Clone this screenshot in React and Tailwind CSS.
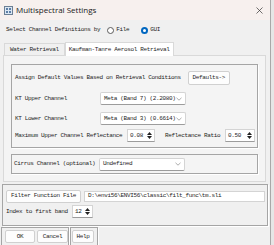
import React from 'react';

const txt = "font-['Liberation_Mono',monospace] text-[6px] tracking-[-0.35px] text-[#1e1e1e] leading-none whitespace-nowrap";

function Chevron() {
  return (
    <svg width="6" height="4" viewBox="0 0 6 4" className="shrink-0">
      <path d="M0.5 0.8 L3 3.2 L5.5 0.8" fill="none" stroke="#8a8a8a" strokeWidth="0.7" />
    </svg>
  );
}

function Select({ value, w = 'w-[86px]' }) {
  return (
    <div className={`${w} h-[13px] bg-white border border-[#d4d4d4] border-b-[#9c9c9c] rounded-[2px] flex items-center justify-between pl-[3px] pr-[3px]`}>
      <span className={txt}>{value}</span>
      <Chevron />
    </div>
  );
}

function Arrows() {
  return (
    <div className="flex flex-col gap-[1px] items-center">
      <svg width="5" height="3" viewBox="0 0 5 3"><path d="M0 3 L2.5 0 L5 3Z" fill="#222" /></svg>
      <svg width="5" height="3" viewBox="0 0 5 3"><path d="M0 0 L2.5 3 L5 0Z" fill="#222" /></svg>
    </div>
  );
}

function Spin({ value, w = 'w-[28px]' }) {
  return (
    <div className={`${w} h-[13px] bg-white border border-[#d4d4d4] border-b-[#9c9c9c] flex items-center justify-between pl-[2px] pr-[2px]`}>
      <span className={txt}>{value}</span>
      <Arrows />
    </div>
  );
}

function Btn({ children, className = '' }) {
  return (
    <div className={`h-[13px] bg-[#fdfdfd] border border-[#d0d0d0] rounded-[2px] flex items-center justify-center ${className}`}>
      <span className={txt}>{children}</span>
    </div>
  );
}

function Radio({ label, on }) {
  return (
    <div className="flex items-center gap-[2px]">
      {on ? (
        <div className="w-[7px] h-[7px] rounded-full bg-[#0067c0] flex items-center justify-center">
          <div className="w-[3px] h-[3px] rounded-full bg-white" />
        </div>
      ) : (
        <div className="w-[7px] h-[7px] rounded-full border border-[#5a5a5a] bg-white" />
      )}
      <span className={txt}>{label}</span>
    </div>
  );
}

export default function App() {
  return (
    <div className="w-[274px] h-[245px] bg-[#e6e6e6] flex overflow-hidden">
      <div className="w-[271px] h-[245px] bg-[#f0f0f0] border-r border-[#a8a8a8] flex flex-col">
        {/* title bar */}
        <div className="h-[20px] bg-[#f7f0ee] flex items-center pl-[4px] pr-[7px] shrink-0">
          <svg width="9" height="9" viewBox="0 0 9 9">
            <rect x="0.5" y="0.5" width="8" height="8" fill="#dbe6f2" stroke="#6d7f94" />
            <path d="M2 2h2v2H2zM5 2h2v2H5zM2 5h2v2H2zM5 5h2v2H5z" fill="#5d7ea6" />
          </svg>
          <span className="ml-[3px] font-['Open_Sans',sans-serif] text-[8px] text-[#1a1a1a] leading-none">Multispectral Settings</span>
          <svg width="7" height="7" viewBox="0 0 7 7" className="ml-auto">
            <path d="M0.5 0.5 L6.5 6.5 M6.5 0.5 L0.5 6.5" stroke="#333" strokeWidth="0.7" />
          </svg>
        </div>

        {/* source row */}
        <div className="h-[20px] flex items-center pl-[6px] shrink-0">
          <span className={txt}>Select Channel Definitions by</span>
          <div className="ml-[7px]"><Radio label="File" /></div>
          <div className="ml-[12px]"><Radio label="GUI" on /></div>
        </div>

        {/* tabs */}
        <div className="flex items-end pl-[4px] h-[14px] mt-[1px] shrink-0">
          <div className="h-[12px] border border-b-0 border-[#d9d9d9] bg-[#f0f0f0] flex items-center px-[5px]">
            <span className={txt}>Water Retrieval</span>
          </div>
          <div className="h-[14px] border border-b-0 border-[#d9d9d9] bg-white flex items-center px-[3px] -mb-[1px] relative">
            <span className={txt}>Kaufman-Tanre Aerosol Retrieval</span>
          </div>
        </div>

        {/* tab panel */}
        <div className="ml-[3px] w-[263px] h-[127px] border border-[#d9d9d9] bg-[#f4f4f4] pl-[7px] pt-[8px] shrink-0">
          <div className="w-[247px] h-[84px] border border-[#a5a5a5] shadow-[1px_1px_0_#ffffff] flex flex-col pl-[3px] pt-[6px]">
            <div className="flex items-center h-[14px]">
              <span className={txt}>Assign Default Values Based on Retrieval Conditions</span>
              <Btn className="ml-[7px] w-[42px] h-[14px]">Defaults-&gt;</Btn>
            </div>
            <div className="flex items-center h-[13px] mt-[7px]">
              <span className={`${txt} w-[85px]`}>KT Upper Channel</span>
              <Select value="Meta (Band 7) (2.2080)" />
            </div>
            <div className="flex items-center h-[13px] mt-[7px]">
              <span className={`${txt} w-[85px]`}>KT Lower Channel</span>
              <Select value="Meta (Band 3) (0.6614)" />
            </div>
            <div className="flex items-center h-[13px] mt-[4px]">
              <span className={`${txt} w-[112px]`}>Maximum Upper Channel Reflectance</span>
              <Spin value="0.08" />
              <span className={`${txt} ml-[10px] w-[60px]`}>Reflectance Ratio</span>
              <Spin value="0.50" w="w-[30px]" />
            </div>
          </div>

          <div className="w-[247px] h-[20px] mt-[6px] border border-[#a5a5a5] shadow-[1px_1px_0_#ffffff] flex items-center pl-[2px]">
            <span className={`${txt} w-[85px]`}>Cirrus Channel (optional)</span>
            <Select value="Undefined" />
          </div>
        </div>

        {/* filter group */}
        <div className="ml-[2px] mt-[2px] w-[266px] h-[42px] border border-[#a5a5a5] shadow-[1px_1px_0_#ffffff] flex flex-col pl-[3px] pt-[5px] shrink-0">
          <div className="flex items-center h-[12px]">
            <Btn className="w-[75px] h-[12px]">Filter Function File</Btn>
            <div className="ml-[3px] w-[181px] h-[11px] bg-white border border-[#d4d4d4] flex items-center pl-[3px]">
              <span className={txt}>D:\envi56\ENVI56\classic\filt_func\tm.sli</span>
            </div>
          </div>
          <div className="flex items-center h-[11px] mt-[4px]">
            <span className={`${txt} w-[66px]`}>Index to first band</span>
            <Spin value="12" w="w-[21px]" />
          </div>
        </div>

        {/* bottom buttons */}
        <div className="flex ml-[1px] mt-[1px] gap-[1px] shrink-0">
          <div className="w-[68px] h-[19px] border border-[#a5a5a5] shadow-[1px_1px_0_#ffffff] flex items-center gap-[2px] pl-[3px]">
            <Btn className="w-[30px]">OK</Btn>
            <Btn className="w-[31px]">Cancel</Btn>
          </div>
          <div className="w-[28px] h-[19px] border border-[#a5a5a5] shadow-[1px_1px_0_#ffffff] flex items-center pl-[1px]">
            <Btn className="w-[22px]">Help</Btn>
          </div>
        </div>
      </div>
    </div>
  );
}
